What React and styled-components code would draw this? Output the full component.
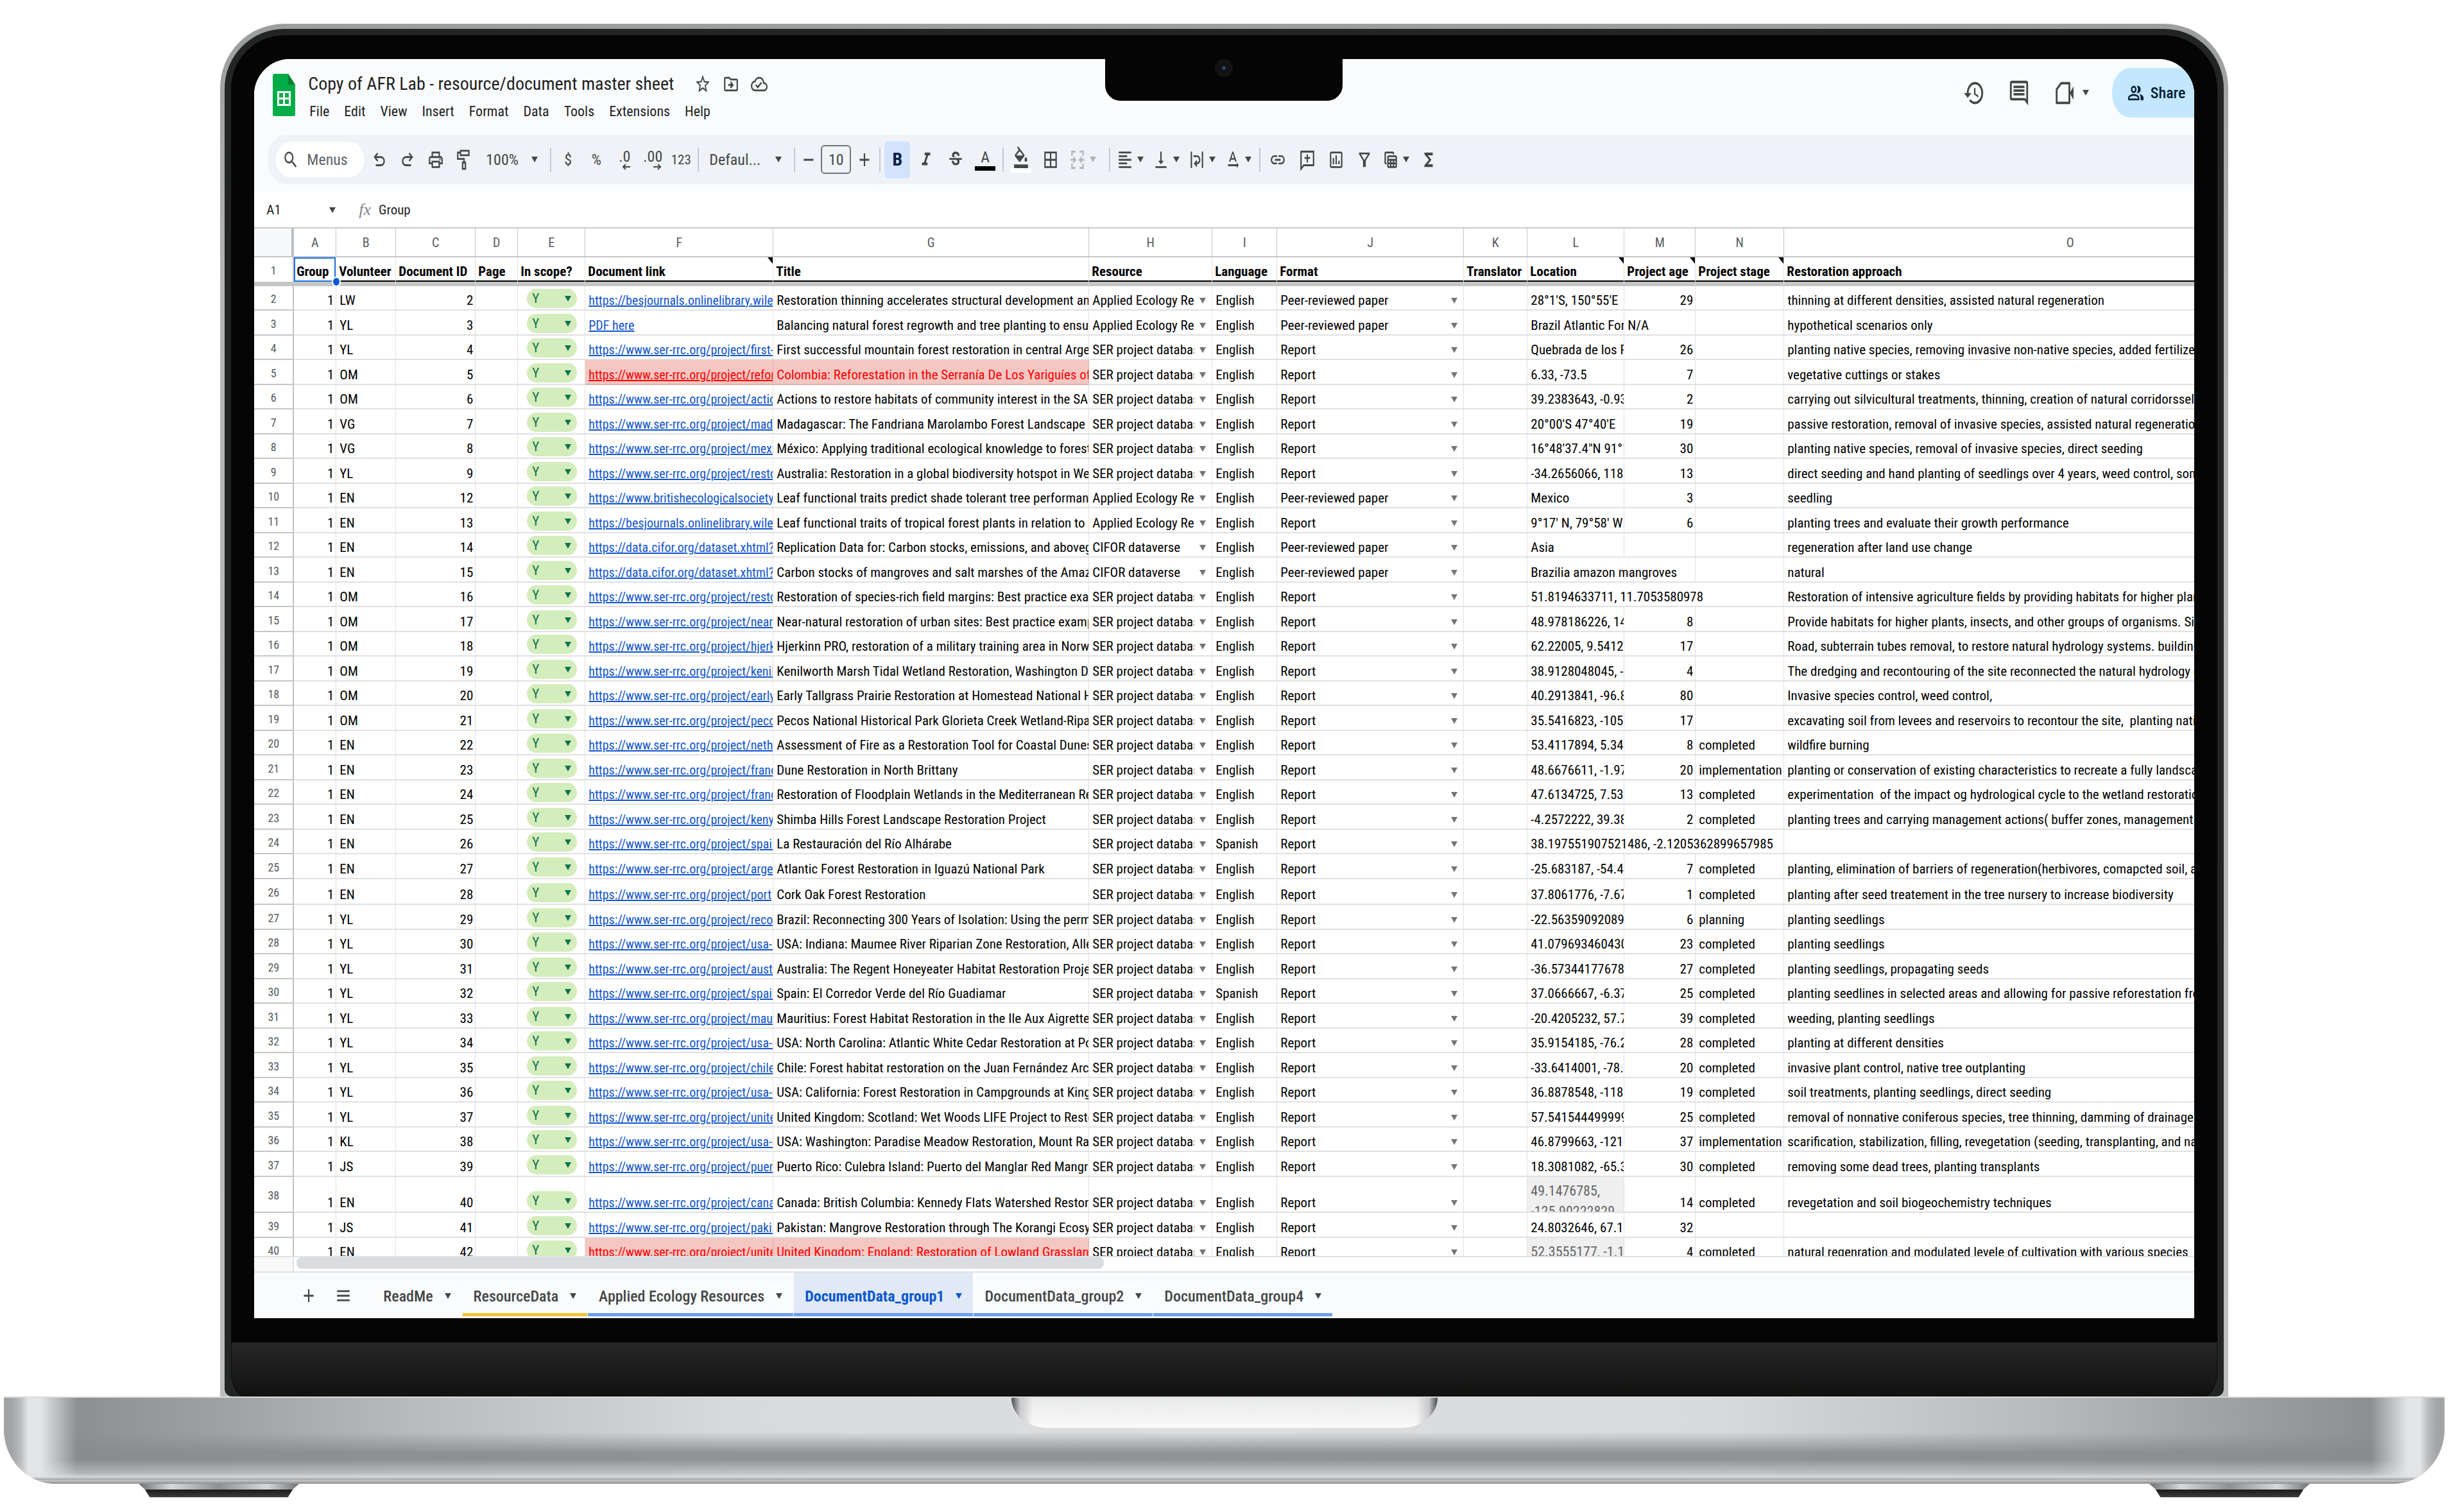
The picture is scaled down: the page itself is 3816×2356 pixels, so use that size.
import styled, { createGlobalStyle, css } from 'styled-components';
import {
  MdAdd,
  MdBorderAll,
  MdFormatAlignLeft,
  MdFormatColorFill,
  MdFormatItalic,
  MdFunctions,
  MdHistory,
  MdLink,
  MdMenu,
  MdOutlineCloudDone,
  MdOutlineComment,
  MdOutlineDriveFileMove,
  MdOutlineFilterAlt,
  MdOutlineInsertChart,
  MdOutlinePeopleAlt,
  MdOutlinePrint,
  MdOutlineTableView,
  MdRemove,
  MdSearch,
  MdStarBorder,
  MdStrikethroughS,
  MdTextRotationNone,
  MdVerticalAlignBottom,
} from 'react-icons/md';

const uiFont = "'Roboto Condensed', Roboto, sans-serif";

const GlobalStyle = createGlobalStyle`
  * {
    box-sizing: border-box;
  }
  body {
    margin: 0;
    background: #ffffff;
  }
  button, input, select {
    margin: 0;
    padding: 0;
    border: none;
    background: none;
    color: inherit;
    font: inherit;
  }
  select {
    appearance: none;
  }
`;

// ---------- Laptop ----------

const Page = styled.main`
  display: flex;
  flex-direction: column;
  height: 100vh;
  padding: 37px 7px 23px 6px;
`;

const Lid = styled.div`
  display: flex;
  flex: 1;
  min-height: 0;
  width: calc(82% + 10px);
  margin: 0 auto;
  padding: 8px 7px 0;
  border-radius: 100px 100px 0 0;
  background: linear-gradient(#9b9d9f, #b4b5b7 20%, #bcbdbf);
`;

const Bezel = styled.div`
  display: flex;
  flex: 1;
  flex-direction: column;
  min-width: 0;
  padding: 10px 10px 0;
  border-radius: 93px 93px 12px 12px;
  background: #232424;
`;

const Glass = styled.div`
  position: relative;
  display: flex;
  flex: 1;
  min-height: 0;
  padding: 37px 36px;
  border-radius: 83px 83px 0 0;
  background: #050505;
`;

const Chin = styled.div`
  height: 85px;
  border: 1px solid #0b0b0b;
  border-radius: 0 0 20px 20px / 0 0 40px 40px;
  background: linear-gradient(#272727, #121211);
`;

// The camera housing hangs over the top edge of the screen
const Notch = styled.div`
  position: absolute;
  top: 0;
  left: 50%;
  display: flex;
  align-items: center;
  justify-content: center;
  width: 370px;
  height: 102px;
  transform: translateX(-50%);
  border-radius: 0 0 24px 24px;
  background: #050505;
`;

const Camera = styled.span`
  width: 28px;
  height: 28px;
  border-radius: 50%;
  background: radial-gradient(circle, #2d4f86 0 2px, #121314 3px);
`;

const Screen = styled.div`
  display: flex;
  flex: 1;
  flex-direction: column;
  min-width: 0;
  overflow: hidden;
  border-radius: 56px 56px 0 0;
  background: #ffffff;
  color: #1f1f1f;
  font-family: ${uiFont};
`;

const Base = styled.div`
  display: flex;
  justify-content: center;
  height: 136px;
  border-top: 2px solid #d9dadc;
  border-radius: 0 0 80px 80px / 0 0 86px 86px;
  background:
    linear-gradient(transparent 88%, rgba(225, 226, 228, 0.7) 92%, #a5a7a9 95%, #c4c6c8 96%, #8b8d8f),
    linear-gradient(90deg, #a2a4a6, rgba(226, 228, 230, 0) 1%, rgba(226, 228, 230, 0) 99%, #a2a4a6),
    linear-gradient(90deg, transparent 0, #e3e5e7 1%, #e3e5e7 1.5%, transparent 3%, transparent 97%, #e3e5e7 98.5%, #e3e5e7 99%, transparent),
    linear-gradient(transparent 40%, rgba(137, 139, 142, 0.9) 64%, rgba(137, 139, 142, 0.9) 72%, rgba(190, 191, 194, 0.8) 88%),
    linear-gradient(90deg, #8d8f91 3%, #9c9ea0 8%, #b9bbbd 17%, #d8dadb 30%, #dcddde 50%, #d8dadb 70%, #b9bbbd 83%, #9c9ea0 92%, #8d8f91 97%);
`;

const Thumbrest = styled.div`
  width: 664px;
  height: 47px;
  border-radius: 0 0 56px 56px / 0 0 47px 47px;
  background:
    linear-gradient(90deg, #4a4b4d, rgba(190, 191, 193, 0.8) 2%, transparent 5%, transparent 95%, rgba(190, 191, 193, 0.8) 98%, #4a4b4d),
    linear-gradient(#e8e9e9, #fafafa);
`;

const Feet = styled.div`
  display: flex;
  justify-content: space-between;
  padding: 0 210px;
`;

const Foot = styled.div`
  width: 250px;
  height: 21px;
  clip-path: polygon(0 0, 100% 0, 96% 43%, 93% 100%, 7% 100%, 4% 43%);
  background:
    linear-gradient(transparent 43%, #1b1b1b 43%, #3c3c3c),
    linear-gradient(90deg, #6f7173, #d6d8da 20%, #8e9092 50%, #d6d8da 80%, #6f7173);
`;

// ---------- Icons ----------

const IconBox = styled.span`
  display: inline-flex;
  flex: none;
  width: ${({ $size }) => ($size === 'large' ? '34px' : '26px')};
  height: ${({ $size }) => ($size === 'large' ? '46px' : '34px')};
  svg {
    display: block;
    width: 100%;
    height: 100%;
  }
`;

const Icon = ({ of: Drawing, size }) => (
  <IconBox $size={size} aria-hidden="true">
    <Drawing preserveAspectRatio="none" />
  </IconBox>
);

const symbol = (d) => (props) => (
  <svg viewBox="0 -960 960 960" fill="currentColor" {...props}>
    <path d={d} />
  </svg>
);

const outline = (children) => (props) => (
  <svg viewBox="0 0 24 24" fill="none" stroke="currentColor" strokeWidth="2" {...props}>
    {children}
  </svg>
);

const UndoIcon = symbol(
  'M280-200v-80h284q63 0 109.5-40T720-420q0-60-46.5-100T564-560H312l104 104-56 56-200-200 200-200 56 56-104 104h252q97 0 167 63t70 157q0 94-70 157t-167 63H280Z'
);
const RedoIcon = symbol(
  'M396-200q-97 0-167-63t-70-157q0-94 70-157t167-63h252L544-744l56-56 200 200-200 200-56-56 104-104H396q-63 0-109.5 40T240-420q0 60 46.5 100T396-280h284v80H396Z'
);
const PaintIcon = outline(
  <>
    <path d="M7 2h12v5H7z" />
    <path d="M7 4H3v7h9v4" />
    <path d="M10 15h4v7h-4z" />
  </>
);
const MergeIcon = outline(
  <>
    <path d="M9 3H4v5M15 3h5v5M9 21H4v-5M15 21h5v-5" />
    <path d="M2 12h7M6 9l3 3-3 3M22 12h-7M18 9l-3 3 3 3" />
  </>
);
const WrapIcon = outline(
  <>
    <path d="M4 3v18M20 3v18" />
    <path d="M7 8h5a4 4 0 0 1 0 8h-2M12 13l-3 3 3 3" />
  </>
);
const AddCommentIcon = outline(
  <>
    <path d="M3 22V3h18v15H7z" />
    <path d="M12 6v9M8 10h8" />
  </>
);
const VideoIcon = outline(
  <>
    <path d="M4 9l5-5h9v16H4z" strokeLinejoin="round" />
    <path d="M19 12l3-4v8z" fill="currentColor" strokeWidth="1" />
  </>
);

const SheetsLogo = styled.svg`
  flex: none;
  width: 35px;
  height: 66px;
  margin-top: 9px;
`;

const Caret = styled.span`
  flex: none;
  width: 0;
  height: 0;
  border: 5px solid transparent;
  border-top: 9px solid currentColor;
  border-bottom: 0;
  pointer-events: none;
`;

// ---------- App header ----------

const TitleBar = styled.header`
  display: flex;
  height: 118px;
  padding: 14px 0 0 29px;
  background: #f9fbfd;
`;

const TitleBlock = styled.div`
  flex: 1;
  margin-left: 20px;
`;

const TitleRow = styled.div`
  display: flex;
  align-items: center;
  gap: 18px;
  height: 50px;
  color: #444746;
`;

const DocTitle = styled.h1`
  margin: 0 14px 0 0;
  color: #1f1f1f;
  font-size: 28px;
  font-weight: 400;
  line-height: 50px;
`;

const IconButton = styled.button`
  display: flex;
  align-items: center;
  color: #444746;
`;

const MenuRow = styled.nav`
  display: flex;
  gap: 23px;
  padding-left: 2px;
  font-size: 22px;
  line-height: 36px;
`;

const Actions = styled.div`
  display: flex;
  align-items: center;
  gap: 36px;
  height: 77px;
  color: #444746;
`;

const VideoButton = styled(IconButton)`
  gap: 12px;
`;

const ShareButton = styled.button`
  display: flex;
  align-items: center;
  gap: 10px;
  width: 128px;
  height: 77px;
  padding-left: 24px;
  border-radius: 28px 0 0 28px / 38px 0 0 38px;
  background: #c2e7ff;
  color: #001d35;
  font-size: 24px;
  font-weight: 500;
`;

const ToolbarWrap = styled.div`
  padding: 0 0 13px 21px;
  background: #f9fbfd;
`;

const Toolbar = styled.div`
  display: flex;
  align-items: center;
  height: 77px;
  padding-left: 13px;
  border-radius: 28px 0 0 28px / 38px 0 0 38px;
  background: #eff3f8;
  color: #444746;
  font-size: 24px;
`;

const SearchMenus = styled.label`
  display: flex;
  align-items: center;
  gap: 12px;
  width: 137px;
  height: 55px;
  margin-right: 2px;
  padding-left: 10px;
  border-radius: 24px / 28px;
  background: #ffffff;
  input {
    width: 72px;
    outline: none;
  }
  input::placeholder {
    color: #5f6368;
    opacity: 1;
  }
`;

const Tool = styled.button`
  display: flex;
  flex: none;
  align-items: center;
  justify-content: center;
  width: ${({ $width = 44 }) => $width}px;
  height: 58px;
  ${({ $small }) => $small && 'font-size: 21px;'}
  ${({ $muted }) => $muted && 'color: #b4b7ba;'}
`;

const MenuTool = styled(Tool)`
  justify-content: flex-start;
  gap: 6px;
  padding-left: 6px;
`;

const BoldTool = styled(Tool)`
  margin: 0 2px;
  border-radius: 6px;
  background: #d3e3fd;
  color: #041e49;
  font-size: 28px;
  font-weight: 700;
`;

const Divider = styled.span`
  flex: none;
  width: 2px;
  height: 38px;
  margin: 0 4px;
  background: #c7cacd;
`;

const PickerBox = styled.span`
  display: flex;
  flex: none;
  align-items: center;
  width: ${({ $width }) => $width}px;
  padding: 0 15px 0 12px;
  select {
    flex: 1;
    min-width: 0;
    outline: none;
  }
`;

const Picker = ({ label, value, width }) => (
  <PickerBox $width={width}>
    <select aria-label={label}>
      <option>{value}</option>
    </select>
    <Caret />
  </PickerBox>
);

const SizeInput = styled.input`
  width: 47px;
  height: 45px;
  margin: 0 2px;
  border: 2px solid #747775;
  border-radius: 6px;
  text-align: center;
`;

const DecimalStack = styled.span`
  display: flex;
  flex-direction: column;
  align-items: flex-end;
  line-height: 22px;
  svg {
    width: 14px;
    height: 10px;
  }
`;

const Swatch = styled.span`
  display: flex;
  flex-direction: column;
  align-items: center;
  width: 32px;
  border-bottom: 7px solid ${({ $color }) => $color};
  line-height: 28px;
`;

const FormulaBar = styled.div`
  display: flex;
  flex: none;
  align-items: center;
  height: 56px;
  padding-left: 19px;
  border-bottom: 2px solid #c7c9cb;
  font-size: 21px;
`;

const NameBox = styled.label`
  display: flex;
  align-items: center;
  width: 144px;
  padding-right: 36px;
  color: #444746;
  input {
    flex: 1;
    min-width: 0;
    color: #1f1f1f;
  }
`;

const FormulaField = styled.label`
  display: flex;
  flex: 1;
  align-items: center;
  gap: 12px;
  i {
    color: #80868b;
    font-family: 'Liberation Serif', serif;
    font-size: 26px;
  }
  input {
    flex: 1;
  }
`;

// ---------- Grid ----------

const GridArea = styled.div`
  flex: 1;
  min-height: 0;
  overflow: hidden;
`;

const Grid = styled.table`
  width: 3276px;
  border-spacing: 0;
  table-layout: fixed;
  color: #000000;
  font-size: 21px;
  line-height: 28px;
  tbody tr {
    height: 38px;
  }
  tbody tr:nth-child(even) {
    height: 39px;
  }
  th, td {
    padding: 0;
  }
`;

const ColumnLetter = styled.th`
  height: 45px;
  border-right: 1px solid #c4c7c5;
  border-bottom: 2px solid #c4c7c5;
  color: #575b5f;
  font-size: 20px;
  font-weight: 400;
`;

const Corner = styled(ColumnLetter)`
  border-right: 4px solid #bdbfc1;
  background: #f8f9fa;
`;

const RowNumber = styled.th`
  border-right: 2px solid #c0c3c5;
  border-bottom: 2px solid #c4c7c5;
  color: #575b5f;
  font-size: 18px;
  font-weight: 400;
  line-height: 24px;
  && {
    padding-top: 4px;
  }
`;

const FrozenNumber = styled(RowNumber)`
  height: 45px;
  border-bottom: 7px solid #c6c6c6;
`;

const HeadCell = styled.th`
  position: relative;
  height: 45px;
  border-right: 1px solid #e1e1e1;
  border-bottom: 7px solid #c6c6c6;
  text-align: left;
  white-space: nowrap;
`;

const HeadText = styled.div`
  height: 38px;
  padding: 8px 0 0 4px;
  overflow: hidden;
  border-bottom: 2px solid #000000;
  ${({ $selected }) =>
    $selected &&
    css`
      padding: 6px 0 0 2px;
      border: 2px solid #1a73e8;
    `}
`;

const FillHandle = styled.span`
  position: absolute;
  right: -8px;
  bottom: -8px;
  z-index: 1;
  width: 14px;
  height: 16px;
  border: 2px solid #ffffff;
  border-radius: 50%;
  background: #0b57d0;
`;

const NoteMark = styled.span`
  position: absolute;
  top: 0;
  right: 0;
  border-top: 10px solid #000000;
  border-left: 8px solid transparent;
`;

const Cell = styled.td`
  overflow: hidden;
  border-right: 1px solid ${({ $flagged }) => ($flagged ? '#dcb0ad' : '#e1e1e1')};
  border-bottom: 2px solid ${({ $flagged }) => ($flagged ? '#dcb0ad' : '#e1e1e1')};
  background: ${({ $flagged, $wrapped }) => ($flagged ? '#f4c7c3' : $wrapped ? '#efefef' : 'transparent')};
  color: ${({ $flagged }) => ($flagged ? '#ff0000' : 'inherit')};
  text-align: ${({ $end }) => ($end ? 'right' : 'left')};
  vertical-align: bottom;
  white-space: pre;
  && {
    padding: 0 ${({ $end }) => ($end ? '3px' : '0')} 0 5px;
  }
`;

const WrappedText = styled.div`
  height: ${({ $tall }) => ($tall ? '54px' : '36px')};
  padding-top: 6px;
  overflow: hidden;
  color: #666666;
  font-size: 22px;
  line-height: 32px;
  white-space: normal;
`;

const CellLink = styled.a`
  color: ${({ $flagged }) => ($flagged ? '#ff0000' : '#1155cc')};
  font-size: 20px;
`;

const Chip = styled.span`
  display: flex;
  align-items: center;
  width: 78px;
  height: 30px;
  margin: 0 0 2px 9px;
  padding: 0 9px 0 8px;
  border-radius: 14px / 15px;
  background: #d4edbc;
  color: #11734b;
  select {
    flex: 1;
    min-width: 0;
  }
`;

const Dropdown = styled.span`
  display: flex;
  align-items: center;
  gap: 8px;
  padding-right: 9px;
  color: #757575;
  select {
    flex: 1;
    min-width: 0;
    overflow: hidden;
    color: #000000;
    text-overflow: clip;
  }
`;

// ---------- Sheet tabs ----------

const ScrollStrip = styled.div`
  display: flex;
  flex: none;
  height: 26px;
  border-top: 2px solid #e1e3e1;
  border-bottom: 2px solid #dfe1e1;
`;

const StripCorner = styled.span`
  width: 62px;
  border-right: 2px solid #e1e3e1;
  background: #f8f8f8;
`;

const ScrollThumb = styled.span`
  width: 41.6%;
  height: 18px;
  margin-left: 4px;
  border-radius: 8px;
  background: #dadce0;
`;

const TabBar = styled.footer`
  display: flex;
  flex: none;
  height: 71px;
  padding: 0 0 3px 58px;
  background: #f9fbfd;
  color: #444746;
`;

const TabTools = styled.div`
  display: flex;
  margin-right: 18px;
`;

const TabTool = styled.button`
  width: 54px;
  padding-top: 8px;
`;

const Tab = styled.button`
  display: flex;
  align-items: center;
  gap: 18px;
  margin-right: 1px;
  padding: 10px 17px 0;
  border-bottom: 5px solid ${({ $line = 'transparent' }) => $line};
  background: ${({ $active }) => ($active ? '#e1e9f7' : 'transparent')};
  color: ${({ $active }) => ($active ? '#0b57d0' : 'inherit')};
  font-size: 24px;
  font-weight: ${({ $active }) => ($active ? 700 : 500)};
`;

// ---------- Data ----------

const menus = ['File', 'Edit', 'View', 'Insert', 'Format', 'Data', 'Tools', 'Extensions', 'Help'];

const columns = [
  { letter: 'A', width: 66, title: 'Group' },
  { letter: 'B', width: 93, title: 'Volunteer' },
  { letter: 'C', width: 124, title: 'Document ID' },
  { letter: 'D', width: 66, title: 'Page' },
  { letter: 'E', width: 105, title: 'In scope?' },
  { letter: 'F', width: 293, title: 'Document link', note: true },
  { letter: 'G', width: 492, title: 'Title' },
  { letter: 'H', width: 192, title: 'Resource' },
  { letter: 'I', width: 101, title: 'Language' },
  { letter: 'J', width: 291, title: 'Format' },
  { letter: 'K', width: 99, title: 'Translator' },
  { letter: 'L', width: 151, title: 'Location', note: true },
  { letter: 'M', width: 111, title: 'Project age', note: true },
  { letter: 'N', width: 138, title: 'Project stage', note: true },
  { letter: 'O', width: 892, title: 'Restoration approach' },
];

const SER = 'SER project database';
const AER = 'Applied Ecology Resources';
const CIFOR = 'CIFOR dataverse';
const ser = (slug) => `https://www.ser-rrc.org/project/${slug}`;

// volunteer, id, link, title, resource, location, age, stage, approach, extras
const rows = [
  ['LW', 2, 'https://besjournals.onlinelibrary.wiley.com/doi', 'Restoration thinning accelerates structural development and carbon', AER, "28°1'S, 150°55'E", 29, '', 'thinning at different densities, assisted natural regeneration', { format: 'Peer-reviewed paper' }],
  ['YL', 3, 'PDF here', 'Balancing natural forest regrowth and tree planting to ensure social', AER, 'Brazil Atlantic Forest', 'N/A', '', 'hypothetical scenarios only', { format: 'Peer-reviewed paper' }],
  ['YL', 4, ser('first-successful'), 'First successful mountain forest restoration in central Argentina', SER, 'Quebrada de los Refugios', 26, '', 'planting native species, removing invasive non-native species, added fertilizer to soil'],
  ['OM', 5, ser('reforestation'), 'Colombia: Reforestation in the Serranía De Los Yariguíes of Santander', SER, '6.33, -73.5', 7, '', 'vegetative cuttings or stakes', { flagged: true }],
  ['OM', 6, ser('actions-to'), 'Actions to restore habitats of community interest in the SAC of', SER, '39.2383643, -0.9321', 2, '', 'carrying out silvicultural treatments, thinning, creation of natural corridorsselective'],
  ['VG', 7, ser('madagascar'), 'Madagascar: The Fandriana Marolambo Forest Landscape Restoration', SER, "20°00'S 47°40'E", 19, '', 'passive restoration, removal of invasive species, assisted natural regeneration, planting'],
  ['VG', 8, ser('mexico-applying'), 'México: Applying traditional ecological knowledge to forest restoration', SER, "16°48'37.4\"N 91°10'", 30, '', 'planting native species, removal of invasive species, direct seeding'],
  ['YL', 9, ser('restoration'), 'Australia: Restoration in a global biodiversity hotspot in Western', SER, '-34.2656066, 118.31', 13, '', 'direct seeding and hand planting of seedlings over 4 years, weed control, some fencing'],
  ['EN', 12, 'https://www.britishecologicalsociety.org', 'Leaf functional traits predict shade tolerant tree performance in', AER, 'Mexico', 3, '', 'seedling', { format: 'Peer-reviewed paper' }],
  ['EN', 13, 'https://besjournals.onlinelibrary.wiley.com/doi', 'Leaf functional traits of tropical forest plants in relation to growth', AER, "9°17' N, 79°58' W", 6, '', 'planting trees and evaluate their growth performance'],
  ['EN', 14, 'https://data.cifor.org/dataset.xhtml?persistent', 'Replication Data for: Carbon stocks, emissions, and aboveground', CIFOR, 'Asia', '', '', 'regeneration after land use change', { format: 'Peer-reviewed paper' }],
  ['EN', 15, 'https://data.cifor.org/dataset.xhtml?persistent', 'Carbon stocks of mangroves and salt marshes of the Amazon', CIFOR, 'Brazilia amazon mangroves', '', '', 'natural', { format: 'Peer-reviewed paper', span: 2 }],
  ['OM', 16, ser('restoration'), 'Restoration of species-rich field margins: Best practice example', SER, '51.8194633711, 11.7053580978', '', '', 'Restoration of intensive agriculture fields by providing habitats for higher plants, insects', { span: 3 }],
  ['OM', 17, ser('near-natural'), 'Near-natural restoration of urban sites: Best practice example', SER, '48.978186226, 14.47', 8, '', 'Provide habitats for higher plants, insects, and other groups of organisms. Site prep'],
  ['OM', 18, ser('hjerkinn-pro'), 'Hjerkinn PRO, restoration of a military training area in Norway', SER, '62.22005, 9.541280', 17, '', 'Road, subterrain tubes removal, to restore natural hydrology systems. buildings removed'],
  ['OM', 19, ser('kenilworth'), 'Kenilworth Marsh Tidal Wetland Restoration, Washington D.C.', SER, '38.9128048045, -76.9', 4, '', 'The dredging and recontouring of the site reconnected the natural hydrology of the marsh'],
  ['OM', 20, ser('early-tallgrass'), 'Early Tallgrass Prairie Restoration at Homestead National Historic', SER, '40.2913841, -96.833', 80, '', 'Invasive species control, weed control, '],
  ['OM', 21, ser('pecos-national'), 'Pecos National Historical Park Glorieta Creek Wetland-Riparian', SER, '35.5416823, -105.68', 17, '', 'excavating soil from levees and reservoirs to recontour the site,  planting native species'],
  ['EN', 22, ser('netherlands'), 'Assessment of Fire as a Restoration Tool for Coastal Dunes in', SER, '53.4117894, 5.34412', 8, 'completed', 'wildfire burning'],
  ['EN', 23, ser('france-dune'), 'Dune Restoration in North Brittany', SER, '48.6676611, -1.9781', 20, 'implementation', 'planting or conservation of existing characteristics to recreate a fully landscaped dune'],
  ['EN', 24, ser('france-flood'), 'Restoration of Floodplain Wetlands in the Mediterranean Region', SER, '47.6134725, 7.53711', 13, 'completed', 'experimentation  of the impact og hydrological cycle to the wetland restoration'],
  ['EN', 25, ser('kenya-shimba'), 'Shimba Hills Forest Landscape Restoration Project', SER, '-4.2572222, 39.3877', 2, 'completed', 'planting trees and carrying management actions( buffer zones, management plans)'],
  ['EN', 26, ser('spain-la'), 'La Restauración del Río Alhárabe', SER, '38.197551907521486, -2.1205362899657985', '', '', '', { language: 'Spanish', span: 3 }],
  ['EN', 27, ser('argentina'), 'Atlantic Forest Restoration in Iguazú National Park', SER, '-25.683187, -54.4545', 7, 'completed', 'planting, elimination of barriers of regeneration(herbivores, comapcted soil, aggressive', { height: 41 }],
  ['EN', 28, ser('port'), 'Cork Oak Forest Restoration', SER, '37.8061776, -7.6711', 1, 'completed', 'planting after seed treatement in the tree nursery to increase biodiversity', { height: 40 }],
  ['YL', 29, ser('reconnecting'), 'Brazil: Reconnecting 300 Years of Isolation: Using the permaculture', SER, '-22.5635909208931', 6, 'planning', 'planting seedlings'],
  ['YL', 30, ser('usa-indiana'), 'USA: Indiana: Maumee River Riparian Zone Restoration, Allen', SER, '41.0796934604301', 23, 'completed', 'planting seedlings'],
  ['YL', 31, ser('australia'), 'Australia: The Regent Honeyeater Habitat Restoration Project', SER, '-36.5734417767831', 27, 'completed', 'planting seedlings, propagating seeds'],
  ['YL', 32, ser('spain-el'), 'Spain: El Corredor Verde del Río Guadiamar', SER, '37.0666667, -6.3711', 25, 'completed', 'planting seedlines in selected areas and allowing for passive reforestation from nearby', { language: 'Spanish' }],
  ['YL', 33, ser('mauritius'), 'Mauritius: Forest Habitat Restoration in the Ile Aux Aigrettes Nature', SER, '-20.4205232, 57.7311', 39, 'completed', 'weeding, planting seedlings'],
  ['YL', 34, ser('usa-north'), 'USA: North Carolina: Atlantic White Cedar Restoration at Pocosin', SER, '35.9154185, -76.211', 28, 'completed', 'planting at different densities'],
  ['YL', 35, ser('chile-forest'), 'Chile: Forest habitat restoration on the Juan Fernández Archipelago', SER, '-33.6414001, -78.821', 20, 'completed', 'invasive plant control, native tree outplanting'],
  ['YL', 36, ser('usa-california'), 'USA: California: Forest Restoration in Campgrounds at Kings', SER, '36.8878548, -118.55', 19, 'completed', 'soil treatments, planting seedlings, direct seeding'],
  ['YL', 37, ser('united-king'), 'United Kingdom: Scotland: Wet Woods LIFE Project to Restore', SER, '57.5415444999991', 25, 'completed', 'removal of nonnative coniferous species, tree thinning, damming of drainage channels'],
  ['KL', 38, ser('usa-washington'), 'USA: Washington: Paradise Meadow Restoration, Mount Rainier', SER, '46.8799663, -121.72', 37, 'implementation', 'scarification, stabilization, filling, revegetation (seeding, transplanting, and natural)'],
  ['JS', 39, ser('puerto-rico'), 'Puerto Rico: Culebra Island: Puerto del Manglar Red Mangrove', SER, '18.3081082, -65.311', 30, 'completed', 'removing some dead trees, planting transplants'],
  ['EN', 40, ser('canada-british'), 'Canada: British Columbia: Kennedy Flats Watershed Restoration', SER, '49.1476785, \u2011125.90222829', 14, 'completed', 'revegetation and soil biogeochemistry techniques', { height: 56, wrapped: true }],
  ['JS', 41, ser('pakistan'), 'Pakistan: Mangrove Restoration through The Korangi Ecosystem', SER, '24.8032646, 67.1211', 32, '', ''],
  ['EN', 42, ser('united-king'), 'United Kingdom: England: Restoration of Lowland Grassland in', SER, '52.3555177,\u00a0\u20111.17431', 4, 'completed', 'natural regenration and modulated levele of cultivation with various species', { flagged: true, wrapped: true }],
];

const tabs = [
  { name: 'ReadMe' },
  { name: 'ResourceData', line: '#f1c232' },
  { name: 'Applied Ecology Resources', line: '#6d9eeb' },
  { name: 'DocumentData_group1', line: '#6d9eeb', active: true },
  { name: 'DocumentData_group2', line: '#6d9eeb' },
  { name: 'DocumentData_group4', line: '#6d9eeb' },
];

const SizedRow = styled.tr`
  && {
    ${({ $height }) => $height && `height: ${$height}px;`}
  }
`;

const CellDropdown = ({ label, value }) => (
  <Dropdown>
    <select aria-label={label}>
      <option>{value}</option>
    </select>
    <Caret />
  </Dropdown>
);

const DataRow = ({ number, row }) => {
  const [volunteer, id, link, title, resource, location, age, stage, approach, extras = {}] = row;
  const { format = 'Report', language = 'English', flagged, wrapped, span = 1, height } = extras;
  return (
    <SizedRow $height={height}>
      <RowNumber scope="row">{number}</RowNumber>
      <Cell $end>1</Cell>
      <Cell>{volunteer}</Cell>
      <Cell $end>{id}</Cell>
      <Cell />
      <Cell>
        <Chip>
          <select aria-label={`In scope, row ${number}`}>
            <option>Y</option>
          </select>
          <Caret />
        </Chip>
      </Cell>
      <Cell $flagged={flagged}>
        <CellLink href="#" $flagged={flagged}>
          {link}
        </CellLink>
      </Cell>
      <Cell $flagged={flagged}>{title}</Cell>
      <Cell>
        <CellDropdown label={`Resource, row ${number}`} value={resource} />
      </Cell>
      <Cell>{language}</Cell>
      <Cell>
        <CellDropdown label={`Format, row ${number}`} value={format} />
      </Cell>
      <Cell />
      <Cell colSpan={span} $wrapped={wrapped}>
        {wrapped ? <WrappedText $tall={height}>{location}</WrappedText> : location}
      </Cell>
      {span < 2 && <Cell $end={age !== 'N/A'}>{age}</Cell>}
      {span < 3 && <Cell>{stage}</Cell>}
      <Cell>{approach}</Cell>
    </SizedRow>
  );
};

const Spreadsheet = () => (
  <GridArea>
    <Grid>
      <colgroup>
        <col width={62} />
        {columns.map(({ letter, width }) => (
          <col key={letter} width={width} />
        ))}
      </colgroup>
      <thead>
        <tr>
          <Corner />
          {columns.map(({ letter }) => (
            <ColumnLetter key={letter} scope="col">
              {letter}
            </ColumnLetter>
          ))}
        </tr>
        <tr>
          <FrozenNumber scope="row">1</FrozenNumber>
          {columns.map(({ letter, title, note }) => (
            <HeadCell key={letter} scope="col">
              <HeadText $selected={letter === 'A'}>{title}</HeadText>
              {letter === 'A' && <FillHandle />}
              {note && <NoteMark />}
            </HeadCell>
          ))}
        </tr>
      </thead>
      <tbody>
        {rows.map((row, index) => (
          <DataRow key={row[1]} number={index + 2} row={row} />
        ))}
      </tbody>
    </Grid>
  </GridArea>
);

const EditorToolbar = () => (
  <ToolbarWrap>
    <Toolbar role="toolbar">
      <SearchMenus>
        <Icon of={MdSearch} />
        <input aria-label="Menus" placeholder="Menus" />
      </SearchMenus>
      <Tool aria-label="Undo"><Icon of={UndoIcon} /></Tool>
      <Tool aria-label="Redo"><Icon of={RedoIcon} /></Tool>
      <Tool aria-label="Print"><Icon of={MdOutlinePrint} /></Tool>
      <Tool aria-label="Paint format"><Icon of={PaintIcon} /></Tool>
      <Picker label="Zoom" value="100%" width={108} />
      <Divider />
      <Tool>$</Tool>
      <Tool>%</Tool>
      <Tool aria-label="Decrease decimal places">
        <DecimalStack>
          .0
          <svg viewBox="0 0 14 10" fill="none" stroke="currentColor" strokeWidth="2"><path d="M14 5H3M7 1L3 5l4 4" /></svg>
        </DecimalStack>
      </Tool>
      <Tool aria-label="Increase decimal places">
        <DecimalStack>
          .00
          <svg viewBox="0 0 14 10" fill="none" stroke="currentColor" strokeWidth="2"><path d="M0 5h11M7 1l4 4-4 4" /></svg>
        </DecimalStack>
      </Tool>
      <Tool $small>123</Tool>
      <Divider />
      <Picker label="Font" value="Defaul..." width={140} />
      <Divider />
      <Tool $width={34} aria-label="Decrease font size"><Icon of={MdRemove} /></Tool>
      <SizeInput aria-label="Font size" defaultValue="10" />
      <Tool $width={38} aria-label="Increase font size"><Icon of={MdAdd} /></Tool>
      <Divider />
      <BoldTool $width={40}>B</BoldTool>
      <Tool $width={46} aria-label="Italic"><Icon of={MdFormatItalic} /></Tool>
      <Tool $width={46} aria-label="Strikethrough"><Icon of={MdStrikethroughS} /></Tool>
      <Tool $width={46}><Swatch $color="#000000">A</Swatch></Tool>
      <Divider />
      <Tool $width={46} aria-label="Fill color"><Swatch $color="#ffffff"><Icon of={MdFormatColorFill} /></Swatch></Tool>
      <Tool $width={46} aria-label="Borders"><Icon of={MdBorderAll} /></Tool>
      <MenuTool $width={64} $muted aria-label="Merge cells"><Icon of={MergeIcon} /><Caret /></MenuTool>
      <Divider />
      <MenuTool $width={56} aria-label="Horizontal align"><Icon of={MdFormatAlignLeft} /><Caret /></MenuTool>
      <MenuTool $width={56} aria-label="Vertical align"><Icon of={MdVerticalAlignBottom} /><Caret /></MenuTool>
      <MenuTool $width={56} aria-label="Text wrapping"><Icon of={WrapIcon} /><Caret /></MenuTool>
      <MenuTool $width={56} aria-label="Text rotation"><Icon of={MdTextRotationNone} /><Caret /></MenuTool>
      <Divider />
      <Tool $width={46} aria-label="Insert link"><Icon of={MdLink} /></Tool>
      <Tool $width={46} aria-label="Insert comment"><Icon of={AddCommentIcon} /></Tool>
      <Tool aria-label="Insert chart"><Icon of={MdOutlineInsertChart} /></Tool>
      <Tool aria-label="Create a filter"><Icon of={MdOutlineFilterAlt} /></Tool>
      <MenuTool $width={56} aria-label="Table views"><Icon of={MdOutlineTableView} /><Caret /></MenuTool>
      <Tool aria-label="Functions"><Icon of={MdFunctions} /></Tool>
    </Toolbar>
  </ToolbarWrap>
);

const SheetsWindow = () => (
  <Screen>
    <TitleBar>
      <SheetsLogo viewBox="0 0 35 66" aria-hidden="true">
        <path d="M3 0h21l11 17v46q0 3-3 3H3q-3 0-3-3V3q0-3 3-3z" fill="#00ac47" />
        <path d="M24 0l11 17H24z" fill="#00832d" />
        <path d="M7 27h21v23H7zM10 30v7h6v-7zM19 30v7h6v-7zM10 40v7h6v-7zM19 40v7h6v-7z" fill="#ffffff" fillRule="evenodd" />
      </SheetsLogo>
      <TitleBlock>
        <TitleRow>
          <DocTitle>Copy of AFR Lab - resource/document master sheet</DocTitle>
          <IconButton aria-label="Star"><Icon of={MdStarBorder} /></IconButton>
          <IconButton aria-label="Move"><Icon of={MdOutlineDriveFileMove} /></IconButton>
          <IconButton aria-label="Saved to Drive"><Icon of={MdOutlineCloudDone} /></IconButton>
        </TitleRow>
        <MenuRow>
          {menus.map((menu) => (
            <button key={menu}>{menu}</button>
          ))}
        </MenuRow>
      </TitleBlock>
      <Actions>
        <IconButton aria-label="Version history"><Icon of={MdHistory} size="large" /></IconButton>
        <IconButton aria-label="Comments"><Icon of={MdOutlineComment} size="large" /></IconButton>
        <VideoButton aria-label="Join a call"><Icon of={VideoIcon} size="large" /><Caret /></VideoButton>
        <ShareButton><Icon of={MdOutlinePeopleAlt} />Share</ShareButton>
      </Actions>
    </TitleBar>
    <EditorToolbar />
    <FormulaBar>
      <NameBox>
        <input aria-label="Name box" defaultValue="A1" />
        <Caret />
      </NameBox>
      <FormulaField>
        <i>fx</i>
        <input aria-label="Formula" defaultValue="Group" />
      </FormulaField>
    </FormulaBar>
    <Spreadsheet />
    <ScrollStrip>
      <StripCorner />
      <ScrollThumb />
    </ScrollStrip>
    <TabBar>
      <TabTools>
        <TabTool aria-label="Add sheet"><Icon of={MdAdd} /></TabTool>
        <TabTool aria-label="All sheets"><Icon of={MdMenu} /></TabTool>
      </TabTools>
      {tabs.map(({ name, line, active }) => (
        <Tab key={name} $line={line} $active={active}>
          {name}
          <Caret />
        </Tab>
      ))}
    </TabBar>
  </Screen>
);

const App = () => (
  <>
    <GlobalStyle />
    <Page>
      <Lid>
        <Bezel>
          <Glass>
            <SheetsWindow />
            <Notch>
              <Camera />
            </Notch>
          </Glass>
          <Chin />
        </Bezel>
      </Lid>
      <Base>
        <Thumbrest />
      </Base>
      <Feet>
        <Foot />
        <Foot />
      </Feet>
    </Page>
  </>
);

export default App;
